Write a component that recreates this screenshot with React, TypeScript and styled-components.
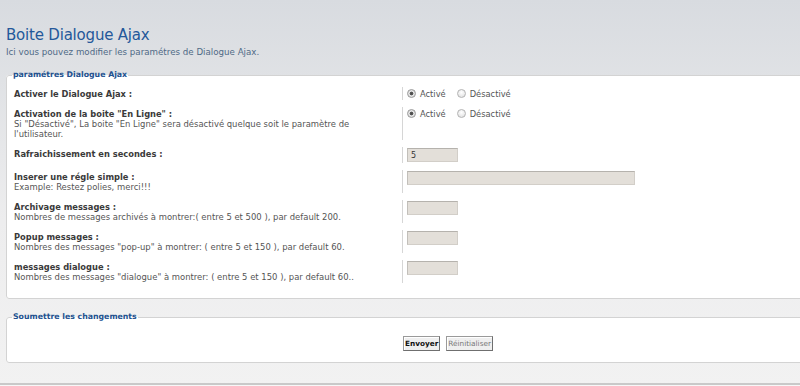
import React from 'react';
import styled, { createGlobalStyle } from 'styled-components';

const GlobalStyle = createGlobalStyle`
  html, body {
    margin: 0;
    padding: 0;
    overflow: hidden;
  }
  body {
    background: linear-gradient(#d8dbe0 0, #e0e2e5 80px, #ededee 220px, #f2f2f2 100%);
    font-family: 'DejaVu Sans', Verdana, sans-serif;
    min-height: 386px;
  }
`;

interface Option {
  label: string;
  hint?: string;
  kind: 'radio' | 'short' | 'long';
  value?: string;
  name?: string;
}

const options: Option[] = [
  { label: 'Activer le Dialogue Ajax :', kind: 'radio', name: 'ajax' },
  {
    label: 'Activation de la boite "En Ligne" :',
    hint: 'Si "Désactivé", La boite "En Ligne" sera désactivé quelque soit le paramètre de l\'utilisateur.',
    kind: 'radio',
    name: 'online',
  },
  { label: 'Rafraichissement en secondes :', kind: 'short', value: '5' },
  { label: 'Inserer une régle simple :', hint: 'Example: Restez polies, merci!!!', kind: 'long' },
  {
    label: 'Archivage messages :',
    hint: 'Nombres de messages archivés à montrer:( entre 5 et 500 ), par default 200.',
    kind: 'short',
  },
  {
    label: 'Popup messages :',
    hint: 'Nombres des messages "pop-up" à montrer: ( entre 5 et 150 ), par default 60.',
    kind: 'short',
  },
  {
    label: 'messages dialogue :',
    hint: 'Nombres des messages "dialogue" à montrer: ( entre 5 et 150 ), par default 60..',
    kind: 'short',
  },
];

export default function App() {
  return (
    <>
      <GlobalStyle />
      <Page>
        <Header>
          <Title>Boite Dialogue Ajax</Title>
          <Subtitle>Ici vous pouvez modifier les paramétres de Dialogue Ajax.</Subtitle>
        </Header>

        <Panel>
          <Legend>paramétres Dialogue Ajax</Legend>
          <Rows>
            {options.map((opt) => (
              <Row key={opt.label}>
                <LabelCell>
                  <Label>{opt.label}</Label>
                  {opt.hint ? <Hint>{opt.hint}</Hint> : null}
                </LabelCell>
                <ValueCell>
                  {opt.kind === 'radio' ? (
                    <Radios>
                      <RadioLabel>
                        <Radio type="radio" name={opt.name} defaultChecked />
                        Activé
                      </RadioLabel>
                      <RadioLabel>
                        <Radio type="radio" name={opt.name} />
                        Désactivé
                      </RadioLabel>
                    </Radios>
                  ) : (
                    <TextInput type="text" defaultValue={opt.value} $wide={opt.kind === 'long'} />
                  )}
                </ValueCell>
              </Row>
            ))}
          </Rows>
        </Panel>

        <Panel $submit>
          <Legend>Soumettre les changements</Legend>
          <Buttons>
            <Button type="button" $main>Envoyer</Button>
            <Button type="reset">Réinitialiser</Button>
          </Buttons>
        </Panel>

        <Footer />
      </Page>
    </>
  );
}

const Page = styled.div`
  width: 884px;
  padding: 0 0 0 6px;
`;

const Header = styled.div`
  padding: 25px 0 0 0;
`;

const Title = styled.h1`
  margin: 0;
  font-family: 'DejaVu Sans', sans-serif;
  font-weight: normal;
  font-size: 15px;
  line-height: 20px;
  color: #24589a;
  letter-spacing: -0.2px;
`;

const Subtitle = styled.p`
  margin: 2px 0 0;
  font-size: 8.7px;
  line-height: 10px;
  color: #4f6a86;
`;

const Panel = styled.fieldset<{ $submit?: boolean }>`
  margin: ${(p) => (p.$submit ? '13px 0 0' : '13px 0 0')};
  padding: ${(p) => (p.$submit ? '0 0 11px' : '7px 0 15px 0')};
  min-inline-size: 0;
  background: #ffffff;
  border: 1px solid #d3d3d3;
  border-radius: 3px;
`;

const Legend = styled.legend`
  margin-left: 5px;
  padding: 0 1px;
  font-size: 7.8px;
  font-weight: bold;
  line-height: 10px;
  color: #22518f;
`;

const Rows = styled.div`
  display: flex;
  flex-direction: column;
  gap: 7px;
`;

const Row = styled.div`
  display: grid;
  grid-template-columns: 395px 1fr;
`;

const LabelCell = styled.div`
  padding: 2px 40px 1px 7px;
`;

const Label = styled.div`
  font-size: 8.3px;
  font-weight: bold;
  line-height: 10px;
  color: #3a3a3a;
`;

const Hint = styled.div`
  font-size: 8.45px;
  line-height: 10px;
  color: #555555;
`;

const ValueCell = styled.div`
  min-height: 11px;
  padding: 1px 0 1px 4px;
  border-left: 1px solid #d6d6d6;
`;

const Radios = styled.div`
  display: flex;
  align-items: center;
  gap: 11px;
  height: 11px;
`;

const RadioLabel = styled.label`
  display: flex;
  align-items: center;
  gap: 4px;
  font-size: 8.3px;
  color: #555555;
`;

const Radio = styled.input`
  appearance: none;
  margin: 0;
  width: 9px;
  height: 9px;
  border: 1px solid #b3b3b3;
  border-radius: 50%;
  background: radial-gradient(circle at 50% 35%, #ffffff 0, #dcdcdc 100%);
  box-sizing: border-box;

  &:checked {
    border-color: #9a9a9a;
    background: radial-gradient(circle, #4a4a4a 0, #5a5a5a 1.6px, #e6e6e6 2.2px, #cfcfcf 100%);
  }
`;

const TextInput = styled.input<{ $wide?: boolean }>`
  display: block;
  box-sizing: border-box;
  width: ${(p) => (p.$wide ? '228px' : '51px')};
  height: 14px;
  margin: 0;
  padding: 0 3px;
  font-family: 'DejaVu Sans', sans-serif;
  font-size: 8px;
  color: #333333;
  background: #e3dfd9;
  border: 1px solid #d2cec8;
  border-top-color: #b5b2ad;
  border-left-color: #c2bfba;
  outline: none;
`;

const Buttons = styled.div`
  display: flex;
  justify-content: center;
  gap: 6px;
  padding-top: 14px;
`;

const Button = styled.button<{ $main?: boolean }>`
  height: 15px;
  padding: 0 1px;
  font-family: 'DejaVu Sans', sans-serif;
  font-size: 7.3px;
  font-weight: ${(p) => (p.$main ? 'bold' : 'normal')};
  color: ${(p) => (p.$main ? '#111111' : '#777777')};
  background: #efefef;
  border: 1px solid #9a9a9a;
  border-right-color: #6f6f6f;
  border-bottom-color: #6f6f6f;
  box-shadow: inset 1px 1px 0 #ffffff;
  cursor: pointer;
`;

const Footer = styled.div`
  margin-top: 20px;
  margin-left: -6px;
  border-top: 2px solid #c9c9c9;
  height: 4px;
  background: #f7f7f7;
`;
